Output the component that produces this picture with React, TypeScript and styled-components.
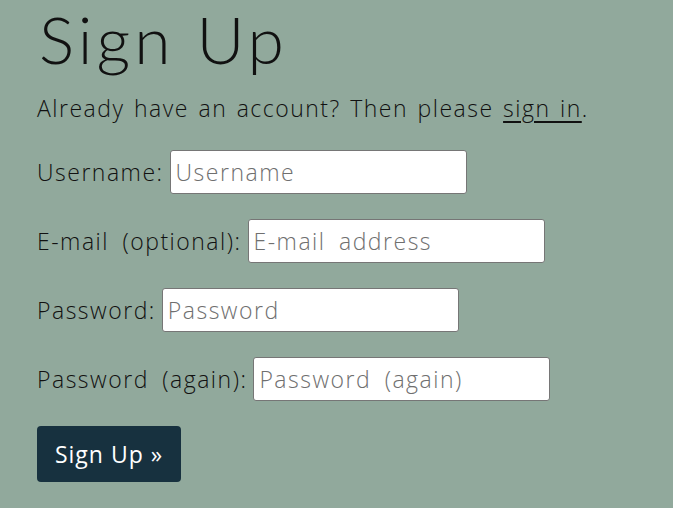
import React from 'react';
import styled, { createGlobalStyle } from 'styled-components';

const GlobalStyle = createGlobalStyle`
  html, body {
    margin: 0;
    padding: 0;
    background: #91a99c;
    font-family: "Open Sans", "Liberation Sans", sans-serif;
    font-weight: 300;
    color: #111;
  }
`;

const Page = styled.main`
  padding: 0 37px;
  height: 508px;
  overflow: hidden;
`;

const Heading = styled.h1`
  margin: 0;
  padding: 6px 0 0 2px;
  font-family: "Lato", "Open Sans", sans-serif;
  font-weight: 300;
  font-size: 66px;
  line-height: 66px;
  letter-spacing: 4px;
`;

const Intro = styled.p`
  margin: 20px 0 0;
  font-size: 23px;
  line-height: 32px;
  letter-spacing: 1.5px;
  word-spacing: 2px;

  a {
    color: inherit;
    text-decoration: underline;
    text-underline-offset: 4px;
  }
`;

const Form = styled.form`
  display: flex;
  flex-direction: column;
  gap: 25px;
  margin-top: 26px;
`;

const Row = styled.div`
  display: flex;
  align-items: center;
  gap: 6px;
  height: 44px;
  font-size: 23px;
  letter-spacing: 1.5px;
  word-spacing: 6px;
`;

const Input = styled.input`
  box-sizing: border-box;
  width: 297px;
  height: 44px;
  border: 1px solid #767676;
  border-radius: 3px;
  background: #fff;
  padding: 0 5px;
  font-family: inherit;
  font-weight: 300;
  font-size: 23px;
  letter-spacing: 1.5px;
  word-spacing: 6px;
  color: #222;

  &::placeholder {
    color: #6f6f6f;
  }
`;

const SubmitButton = styled.button`
  align-self: flex-start;
  width: 144px;
  height: 56px;
  border: none;
  border-radius: 4px;
  background: #17313f;
  color: #fff;
  font-family: inherit;
  font-weight: 400;
  font-size: 23px;
  letter-spacing: 1px;
`;

const fields = [
  { label: 'Username:', placeholder: 'Username', type: 'text' },
  { label: 'E-mail (optional):', placeholder: 'E-mail address', type: 'email' },
  { label: 'Password:', placeholder: 'Password', type: 'password' },
  { label: 'Password (again):', placeholder: 'Password (again)', type: 'password' },
];

export default function App() {
  return (
    <>
      <GlobalStyle />
      <Page>
        <Heading>Sign Up</Heading>
        <Intro>
          Already have an account? Then please <a href="#">sign in</a>.
        </Intro>
        <Form onSubmit={(e) => e.preventDefault()}>
          {fields.map((f) => (
            <Row key={f.label}>
              <label>{f.label}</label>
              <Input type={f.type} placeholder={f.placeholder} />
            </Row>
          ))}
          <SubmitButton type="submit">Sign Up »</SubmitButton>
        </Form>
      </Page>
    </>
  );
}
